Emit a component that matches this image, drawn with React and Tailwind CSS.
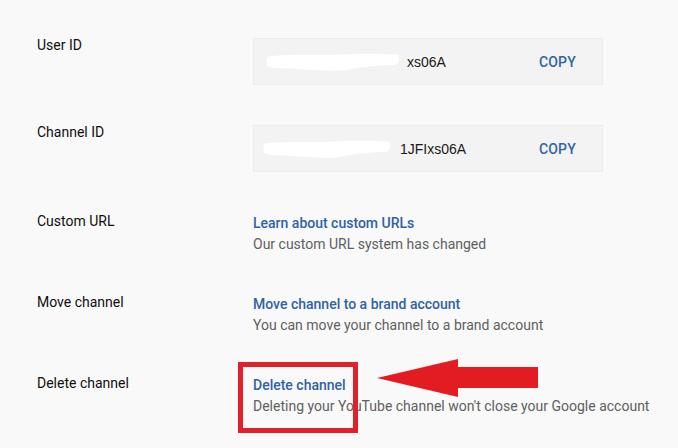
import React from "react";

function Blob({ w, h }) {
  return (
    <svg width={w} height={h} viewBox="0 0 134 22" preserveAspectRatio="none" className="shrink-0">
      <path
        d="M2 5 C20 2 50 4 70 3 C95 1 120 2 132 3 C134 8 133 12 130 14 C110 15 95 16 80 20 C60 22 40 19 20 18 C10 18 3 17 1 15 C0 11 0 8 2 5 Z"
        fill="#ffffff"
      />
    </svg>
  );
}

function IdRow({ label, blobW, blobMl, textMl, value, className }) {
  return (
    <div className={"flex items-start " + className}>
      <div className="w-[216px] text-[#0f0f0f]">{label}</div>
      <div className="mt-[3px] w-[350px] h-[47px] bg-[#f3f3f3] border border-[#ececec] flex items-center">
        <div className={blobMl}>
          <Blob w={blobW} h={20} />
        </div>
        <span className={"font-['Liberation_Sans',Arial,sans-serif] text-[#1a1a1a] text-[14px] " + textMl}>
          {value}
        </span>
        <span className="ml-auto mr-[26px] font-medium text-[#2f64a8] tracking-[0.2px]">COPY</span>
      </div>
    </div>
  );
}

function LinkRow({ label, link, sub, className }) {
  return (
    <div className={"flex items-start " + className}>
      <div className="w-[216px] text-[#0f0f0f]">{label}</div>
      <div className="mt-[2px]">
        <div className="text-[#2f62a6] font-medium leading-[21px]">{link}</div>
        <div className="text-[#606060] leading-[20px]">{sub}</div>
      </div>
    </div>
  );
}

export default function App() {
  return (
    <div className="relative w-[678px] h-[448px] overflow-hidden bg-[#f9f9f9] font-['Roboto',sans-serif] text-[14px] leading-[20px]">
      <div className="pl-[37px] pt-[35px]">
        <IdRow label="User ID" blobW={134} blobMl="ml-[12px]" textMl="ml-[7px]" value="xs06A" className="" />
        <IdRow
          label="Channel ID"
          blobW={128}
          blobMl="ml-[9px]"
          textMl="ml-[9px]"
          value="1JFIxs06A"
          className="mt-[37px]"
        />
        <LinkRow
          label="Custom URL"
          link="Learn about custom URLs"
          sub="Our custom URL system has changed"
          className="mt-[39px]"
        />
        <LinkRow
          label="Move channel"
          link="Move channel to a brand account"
          sub="You can move your channel to a brand account"
          className="mt-[38px]"
        />
        <LinkRow
          label="Delete channel"
          link="Delete channel"
          sub="Deleting your YouTube channel won't close your Google account"
          className="mt-[38px]"
        />
      </div>

      <div className="absolute left-[238px] top-[362px] w-[120px] h-[71px] border-[5px] border-[#e0202a]" />

      <svg className="absolute left-0 top-0" width="678" height="448" viewBox="0 0 678 448">
        <polygon
          points="377,378 458,359 458,367 538,367 538,388 458,388 458,397"
          fill="#e31b23"
        />
      </svg>
    </div>
  );
}
